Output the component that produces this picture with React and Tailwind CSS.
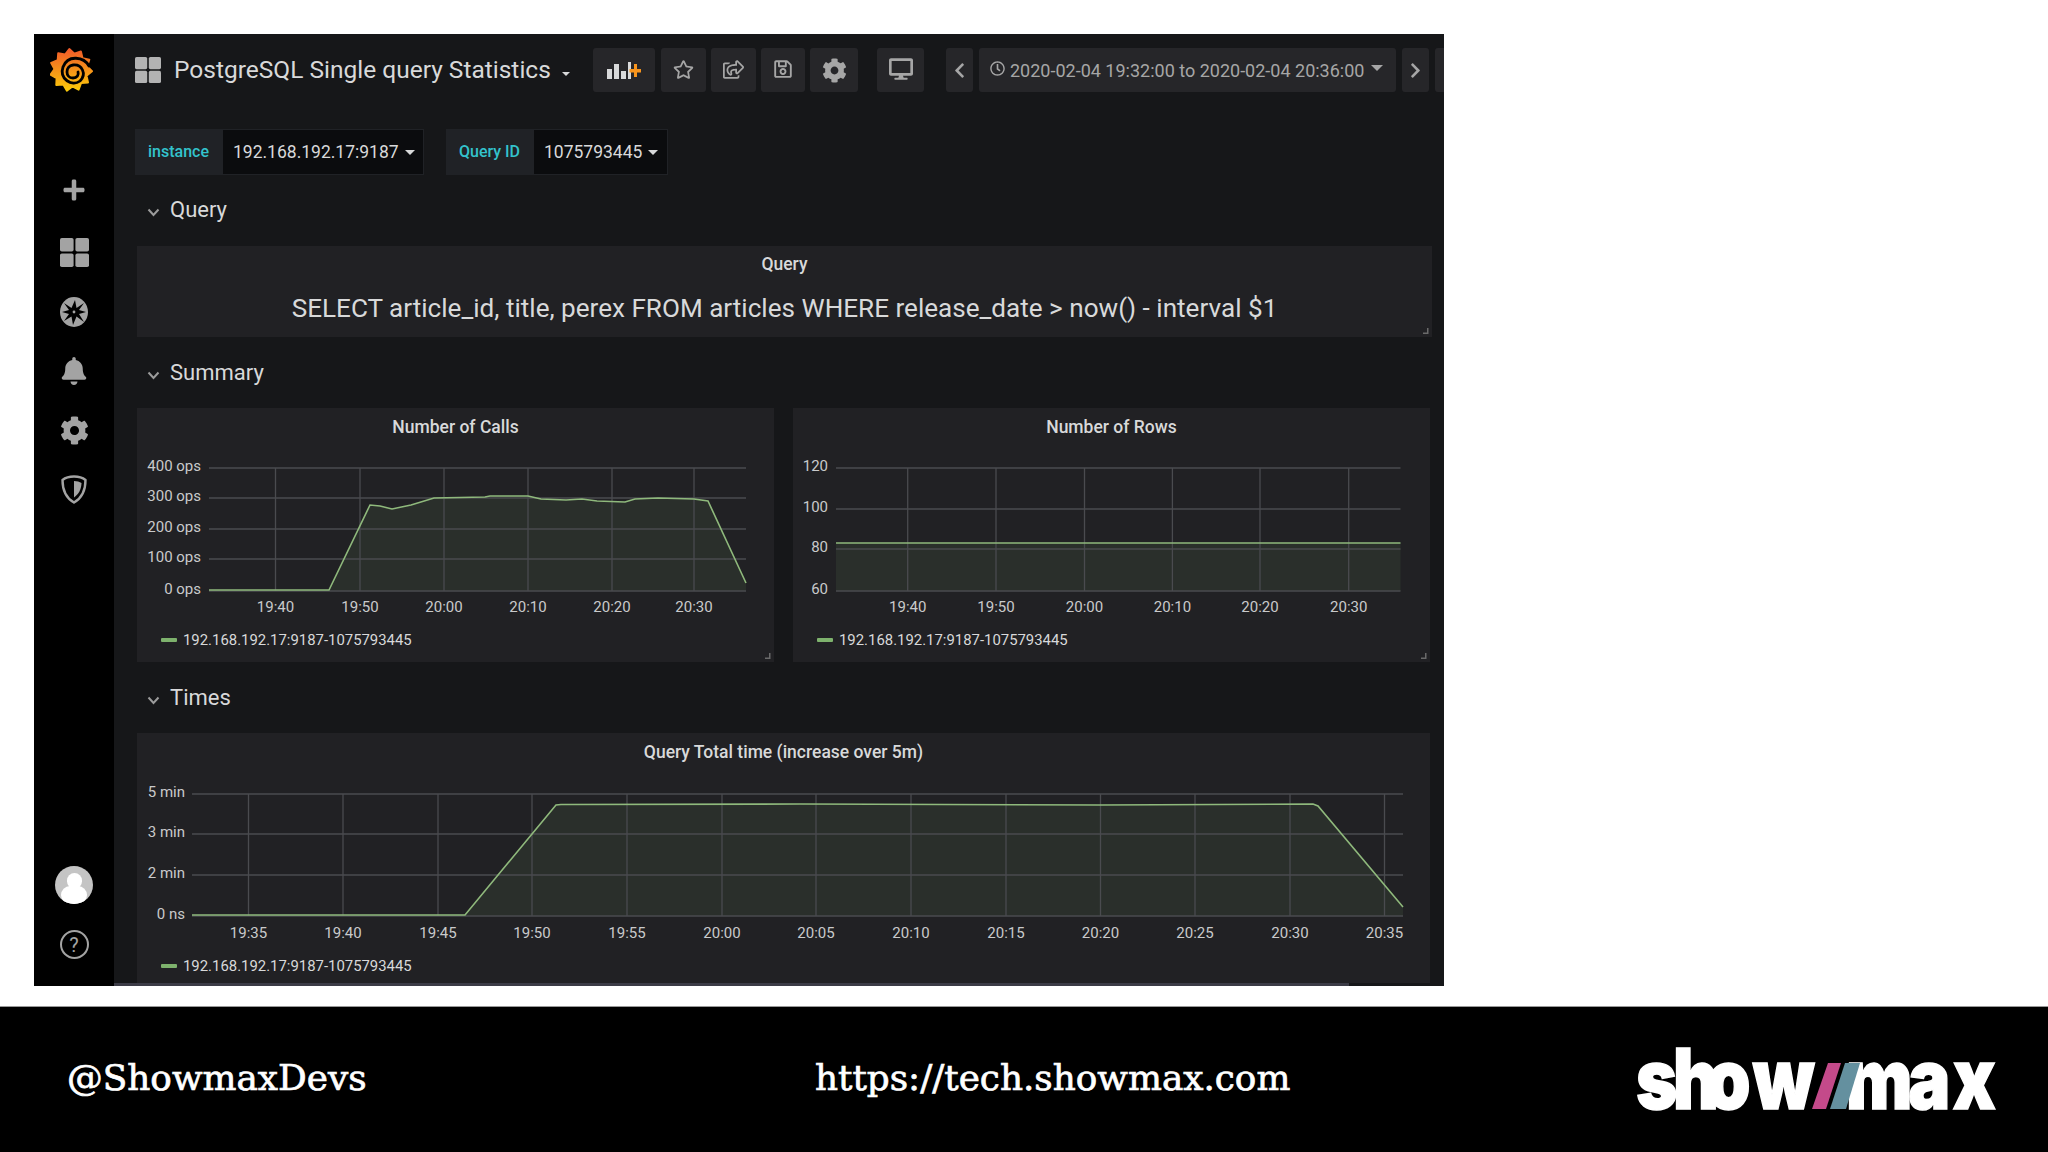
import { FaBell, FaChevronLeft, FaChevronRight, FaCog, FaDesktop, FaPlus, FaRegClock, FaRegSave, FaRegShareSquare, FaRegStar } from "react-icons/fa";

const LEGEND = "192.168.192.17:9187-1075793445";

const GridIcon = ({ size, color }) => (
  <svg width={size} height={size} viewBox="0 0 26 26" fill={color} className="shrink-0">
    <rect x="0" y="0" width="12.2" height="12.2" rx="1.6" />
    <rect x="13.8" y="0" width="12.2" height="12.2" rx="1.6" />
    <rect x="0" y="13.8" width="12.2" height="12.2" rx="1.6" />
    <rect x="13.8" y="13.8" width="12.2" height="12.2" rx="1.6" />
  </svg>
);

const sunPoints = Array.from({ length: 22 }, (_, i) => {
  const r = i % 2 === 0 ? 21 : 16.5;
  const a = ((i * (360 / 22) - 62) * Math.PI) / 180;
  return `${(71 + r * Math.cos(a)).toFixed(1)},${(70 + r * Math.sin(a)).toFixed(1)}`;
}).join(" ");

const GrafanaLogo = () => (
  <svg width="48" height="46" viewBox="50 47 48 46" className="shrink-0">
    <defs>
      <linearGradient id="sun" x1="0" y1="0" x2="0" y2="1">
        <stop offset="0" stopColor="#f15a29" />
        <stop offset="1" stopColor="#fbca0a" />
      </linearGradient>
    </defs>
    <polygon points={sunPoints} fill="url(#sun)" stroke="url(#sun)" strokeWidth="2" strokeLinejoin="round" />
    <path d="M89 66 C84 57 68 54 63 67 C59 79 72 87 80 81 C87 74 82 64 73 65 C65 66 65 78 73 78 C77 78 79 75 78 72" fill="none" stroke="#000" strokeWidth="2.800" strokeLinecap="round" />
  </svg>
);

const CompassIcon = () => (
  <svg width="28" height="30" viewBox="0 0 28 30" className="mt-[30px]">
    <ellipse cx="14" cy="15" rx="14" ry="15" fill="#a3a3a3" />
    <polygon points="15,3 16.500,11 24,6 19,13 26,15 19,17 24,25 16.500,19.500 13,28 11.500,19.500 4,24 9,17 2,15 9,13 4,6 11.500,11" fill="#000" />
    <circle cx="14" cy="15" r="1.400" fill="#a3a3a3" />
  </svg>
);

const ShieldIcon = () => (
  <svg width="26" height="29" viewBox="0 0 26 29" className="mt-[30px]">
    <path d="M13 1.500 C8 1.500 4 3 1.500 5 C1.500 15 5 23 13 27.500 C21 23 24.500 15 24.500 5 C22 3 18 1.500 13 1.500 Z" fill="none" stroke="#a3a3a3" strokeWidth="2.400" />
    <path d="M13 6 C16 6 18.500 6.800 20.500 8 C20.300 14 18 19 13 22.500 Z" fill="#a3a3a3" />
  </svg>
);

const AddPanelIcon = () => (
  <svg width="34" height="18" viewBox="0 0 34 18">
    <rect x="0" y="8" width="5" height="10" fill="#d8d9da" />
    <rect x="7" y="3" width="5" height="15" fill="#d8d9da" />
    <rect x="14" y="10" width="5" height="8" fill="#d8d9da" />
    <rect x="21" y="1" width="3" height="17" fill="#d8d9da" />
    <path d="M27 3h3v5h4.500v3.500H30V16h-3v-4.500h-4.500V8H27z" fill="#f7941d" />
  </svg>
);

const ToolButton = ({ className, children }) => (
  <div className={`h-[44px] flex items-center rounded-[3px] bg-[#262629] text-[#a6a6a6] shrink-0 ${className}`}>
    {children}
  </div>
);

const Variable = ({ label, value, labelWidth, valueWidth }) => (
  <div className="flex h-[46px]">
    <div className={`flex items-center justify-center bg-[#202226] text-[#33c3cc] text-[16px] font-medium ${labelWidth}`}>{label}</div>
    <div className={`flex items-center pl-[10px] pt-[1px] bg-[#0b0c0e] border border-[#202226] text-[#d8d9da] text-[17.500px] ${valueWidth}`}>
      {value}
      <span className="ml-[6px] w-0 h-0 border-x-[5px] border-x-transparent border-t-[5px] border-t-[#d8d9da]" />
    </div>
  </div>
);

const RowTitle = ({ title }) => (
  <div className="h-[32px] flex items-center ml-[12px] text-[#d8d9da] text-[22px]">
    <svg width="13" height="9" viewBox="0 0 13 9" className="mt-[5px] mr-[10px]" fill="none" stroke="#9b9b9b" strokeWidth="2">
      <path d="M1.500 1.500 L6.500 7 L11.500 1.500" />
    </svg>
    <span className="-mt-[2px]">{title}</span>
  </div>
);

const Grip = () => (
  <svg width="6" height="6" viewBox="0 0 6 6" className="absolute right-[3px] bottom-[3px]">
    <path d="M5.500 0v6H0v-1.500h4V0z" fill="#6a6a6a" />
  </svg>
);

const Legend = () => (
  <div className="flex items-center h-[24px] ml-[24px] text-[#d8d9da] text-[14.900px]">
    <span className="w-[16px] h-[4px] bg-[#7eb26d] rounded-[1px] mr-[6px]" />
    {LEGEND}
  </div>
);

// all chart coordinates are page pixels, viewBox just offsets them
const Chart = ({ box, x0, x1, ys, yLabels, xs, xLabels, labelRight, line, labelY }) => (
  <svg width={box[2]} height={box[3]} viewBox={box.join(" ")} className="block">
    <polygon points={`${line} ${x1},${ys[ys.length - 1]} ${x0},${ys[ys.length - 1]}`} fill="#7eb26d" fillOpacity="0.1" />
    {ys.map((y) => (
      <line key={y} x1={x0} x2={x1} y1={y} y2={y} stroke="#4a4b4f" strokeWidth="1.300" />
    ))}
    {xs.map((x) => (
      <line key={x} x1={x} x2={x} y1={ys[0]} y2={ys[ys.length - 1]} stroke="#4a4b4f" strokeWidth="1.300" />
    ))}
    <polyline points={line} fill="none" stroke="#8fb97c" strokeWidth="1.600" />
    {yLabels.map((t, i) => (
      <text key={t} x={labelRight} y={ys[i] + 3} textAnchor="end" fill="#c9cacb" fontSize="15">{t}</text>
    ))}
    {xLabels.map((t, i) => (
      <text key={t} x={xs[i]} y={labelY} textAnchor="middle" fill="#c9cacb" fontSize="15">{t}</text>
    ))}
  </svg>
);

const callsLine = [
  [209, 590], [329, 590], [370, 505], [380, 506], [392, 509], [411, 505], [434, 498], [485, 497], [490, 496], [528, 496],
  [541, 499], [566, 500], [582, 499], [597, 501], [625, 502], [635, 499], [658, 498], [694, 499], [708, 501], [746, 583],
].map((p) => p.join(",")).join(" ");

const ShowmaxLogo = () => (
  <svg width="362" height="66" viewBox="1636 1048 362 66" className="shrink-0 overflow-visible">
    <g transform="translate(1636 0) scale(0.84 1)" fill="#fff" stroke="#fff" strokeWidth="1.500" fontFamily="Inter" fontWeight="900" fontSize="84">
      <text x="0 44 84 139" y="1111">show</text>
      <text x="250 324 377" y="1111">max</text>
    </g>
    <polygon points="1808,1113 1824,1063 1845,1063 1830,1113" fill="#000" />
    <polygon points="1812,1111 1828,1065 1841,1065 1826,1111" fill="#c44a8a" />
    <polygon points="1830,1111 1845,1065 1860,1065 1846,1111" fill="#64909f" />
  </svg>
);

export default function App() {
  return (
    <div className="w-[2048px] h-[1152px] flex flex-col bg-white font-['Roboto',sans-serif] overflow-hidden">
      <div className="h-[1007px] pt-[34px] pl-[34px] shrink-0 border-b border-[#999]">
        <div className="w-[1410px] h-[952px] flex overflow-hidden">
          <aside className="w-[80px] bg-black flex flex-col items-center shrink-0 pt-[13px] pb-[27px] text-[#a3a3a3]">
            <GrafanaLogo />
            <FaPlus size={24} className="mt-[85px]" />
            <div className="mt-[36px]"><GridIcon size={29} color="#a3a3a3" /></div>
            <CompassIcon />
            <FaBell size={28} className="mt-[30px]" />
            <FaCog size={29} className="mt-[31px]" />
            <ShieldIcon />
            <div className="mt-auto w-[38px] h-[38px] rounded-full bg-[#c4c4c4] overflow-hidden flex flex-col items-center">
              <div className="w-[15px] h-[18px] mt-[7px] rounded-full bg-white" />
              <div className="w-[26px] h-[20px] -mt-[3px] rounded-full bg-white" />
            </div>
            <div className="mt-[26px] w-[29px] h-[29px] rounded-full border-2 border-[#a3a3a3] flex items-center justify-center text-[20px] leading-none">?</div>
          </aside>
          <main className="flex-1 min-w-0 bg-[#161719] pl-[21px] overflow-hidden">
            <div className="flex items-center mt-[14px] h-[44px]">
              <GridIcon size={26} color="#b3b3b3" />
              <div className="ml-[13px] w-[395px] shrink-0 flex items-center whitespace-nowrap">
                <span className="text-[#d8d9da] text-[24.500px]">PostgreSQL Single query Statistics</span>
                <span className="ml-[11px] mt-[7px] w-0 h-0 border-x-[4px] border-x-transparent border-t-[4px] border-t-[#d8d9da]" />
              </div>
              <ToolButton className="w-[62px] ml-[24px] justify-center"><AddPanelIcon /></ToolButton>
              <ToolButton className="w-[45px] ml-[6px] justify-center"><FaRegStar size={21} className="-mt-[2px]" /></ToolButton>
              <ToolButton className="w-[45px] ml-[5px] justify-center"><FaRegShareSquare size={21} className="-mt-[2px]" /></ToolButton>
              <ToolButton className="w-[44px] ml-[5px] justify-center"><FaRegSave size={20} className="-mt-[2px]" /></ToolButton>
              <ToolButton className="w-[48px] ml-[5px] justify-center"><FaCog size={25} /></ToolButton>
              <ToolButton className="w-[47px] ml-[19px] justify-center"><FaDesktop size={24} className="-mt-[2px]" /></ToolButton>
              <ToolButton className="w-[27px] ml-[22px] justify-center"><FaChevronLeft size={17} /></ToolButton>
              <ToolButton className="w-[417px] ml-[6px] pl-[11px] text-[18px] whitespace-nowrap">
                <FaRegClock size={15} className="mr-[5px] -mt-[3px]" />
                <span>2020-02-04 19:32:00 to 2020-02-04 20:36:00</span>
                <span className="ml-[7px] -mt-[4px] w-0 h-0 border-x-[6px] border-x-transparent border-t-[6px] border-t-[#a6a6a6]" />
              </ToolButton>
              <ToolButton className="w-[27px] ml-[6px] justify-center"><FaChevronRight size={17} /></ToolButton>
              <ToolButton className="w-[20px] ml-[6px]" />
            </div>

            <div className="flex mt-[37px] gap-[22px]">
              <Variable label="instance" value="192.168.192.17:9187" labelWidth="w-[87px]" valueWidth="w-[202px]" />
              <Variable label="Query ID" value="1075793445" labelWidth="w-[87px]" valueWidth="w-[135px]" />
            </div>

            <div className="mt-[19px]"><RowTitle title="Query" /></div>
            <div className="relative mt-[20px] ml-[2px] w-[1295px] h-[91px] bg-[#212124]">
              <div className="h-[36px] flex items-center justify-center text-[#d8d9da] text-[17.500px] font-medium">Query</div>
              <div className="mt-[9px] h-[36px] flex items-center justify-center text-[#d8d9da] text-[26.100px]">
                SELECT article_id, title, perex FROM articles WHERE release_date &gt; now() - interval $1
              </div>
              <Grip />
            </div>

            <div className="mt-[20px]"><RowTitle title="Summary" /></div>
            <div className="mt-[19px] ml-[2px] w-[1293px] grid grid-cols-2 gap-x-[19px]">
              <div className="relative h-[254px] bg-[#212124]">
                <div className="h-[38px] flex items-center justify-center text-[#d8d9da] text-[17.500px] font-medium">Number of Calls</div>
                <Chart
                  box={[137, 446, 637, 182]}
                  x0={209}
                  x1={746}
                  ys={[468, 498, 529, 559, 591]}
                  yLabels={["400 ops", "300 ops", "200 ops", "100 ops", "0 ops"]}
                  xs={[275.500, 360, 444, 528, 612, 694]}
                  xLabels={["19:40", "19:50", "20:00", "20:10", "20:20", "20:30"]}
                  labelRight={201}
                  labelY={612}
                  line={callsLine}
                />
                <Legend />
                <Grip />
              </div>
              <div className="relative h-[254px] bg-[#212124]">
                <div className="h-[38px] flex items-center justify-center text-[#d8d9da] text-[17.500px] font-medium">Number of Rows</div>
                <Chart
                  box={[793, 446, 637, 182]}
                  x0={836}
                  x1={1400.500}
                  ys={[468, 509, 549, 591]}
                  yLabels={["120", "100", "80", "60"]}
                  xs={[907.700, 996, 1084.500, 1172.400, 1260, 1348.700]}
                  xLabels={["19:40", "19:50", "20:00", "20:10", "20:20", "20:30"]}
                  labelRight={828}
                  labelY={612}
                  line="836,543 1400.500,543"
                />
                <Legend />
                <Grip />
              </div>
            </div>

            <div className="mt-[20px]"><RowTitle title="Times" /></div>
            <div className="mt-[19px] ml-[2px] w-[1293px] h-[250px] bg-[#212124]">
              <div className="h-[38px] flex items-center justify-center text-[#d8d9da] text-[17.500px] font-medium">Query Total time (increase over 5m)</div>
              <Chart
                box={[137, 771, 1293, 183]}
                x0={192}
                x1={1403}
                ys={[794, 834, 875, 916]}
                yLabels={["5 min", "3 min", "2 min", "0 ns"]}
                xs={[248.500, 343, 438, 532, 627, 722, 816, 911, 1006, 1100.500, 1195, 1290, 1384.500]}
                xLabels={["19:35", "19:40", "19:45", "19:50", "19:55", "20:00", "20:05", "20:10", "20:15", "20:20", "20:25", "20:30", "20:35"]}
                labelRight={185}
                labelY={938}
                line="192,915 465,915 556,805 561,804.500 800,804 1100,805 1313,804 1318,806 1403,907"
              />
              <Legend />
            </div>
            <div className="-ml-[21px] w-[1235px] h-[3px] bg-[#3b3b46]" />
          </main>
        </div>
      </div>
      <footer className="flex-1 bg-black text-white flex items-center font-['DejaVu_Serif',serif] text-[35.800px] [-webkit-text-stroke:0.7px_white]">
        <span className="ml-[67px] -mt-[3px] w-[748px]">@ShowmaxDevs</span>
        <span className="-mt-[3px]">https://tech.showmax.com</span>
        <div className="ml-auto mr-[50px] -mt-[1px]"><ShowmaxLogo /></div>
      </footer>
    </div>
  );
}
